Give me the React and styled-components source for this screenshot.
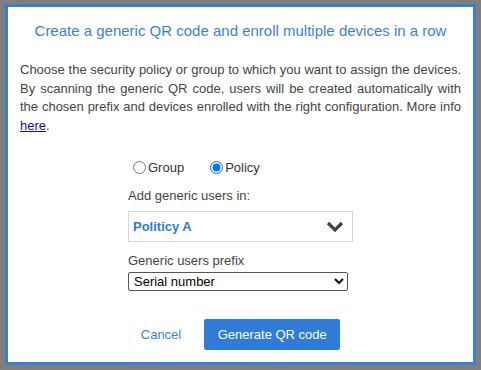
import React, { useState } from "react";
import styled, { createGlobalStyle } from "styled-components";

const GlobalStyle = createGlobalStyle`
  html, body {
    margin: 0;
    padding: 0;
    background: #7f7f7f;
    font-family: "Liberation Sans", Arial, sans-serif;
  }
`;

const Backdrop = styled.div`
  width: 481px;
  height: 370px;
  background: #7f7f7f;
  padding: 4px 5px 0 5px;
  box-sizing: border-box;
  overflow: hidden;
`;

const Modal = styled.div`
  width: 471px;
  height: 361px;
  box-sizing: border-box;
  border: 3px solid #3a80cc;
  background: #fff;
  display: flex;
  flex-direction: column;
  padding: 15px 12px 0 12px;
`;

const Title = styled.h2`
  margin: 0;
  font-size: 15px;
  font-weight: normal;
  line-height: 18px;
  color: #3d7fd6;
  text-align: center;
`;

const Intro = styled.p`
  margin: 21px 0 0 0;
  font-size: 13px;
  line-height: 18.6px;
  color: #444;
  text-align: justify;
`;

const Link = styled.a`
  color: #1a0dab;
  text-decoration: underline;
`;

const Form = styled.div`
  width: 225px;
  align-self: center;
  display: flex;
  flex-direction: column;
  margin-top: 22px;
`;

const RadioRow = styled.div`
  display: flex;
  gap: 26px;
  padding-left: 5px;
  height: 20px;
  align-items: center;
`;

const RadioLabel = styled.label`
  display: flex;
  align-items: center;
  font-size: 13px;
  color: #333;
  gap: 2px;

  input {
    margin: 0;
    width: 13px;
    height: 13px;
  }
`;

const FieldLabel = styled.div`
  font-size: 13px;
  color: #444;
  line-height: 16px;
  margin-top: ${(p) => p.$top}px;
`;

const DropBox = styled.div`
  margin-top: 7px;
  height: 31px;
  box-sizing: border-box;
  border: 1px solid #d6d6d6;
  display: flex;
  align-items: center;
  justify-content: space-between;
  padding: 0 8px 0 4px;
  font-size: 13px;
  font-weight: bold;
  color: #2f7bd6;
`;

const NativeSelect = styled.select`
  margin-top: 3px;
  width: 220px;
  height: 19px;
  font-size: 13px;
  font-family: "Liberation Sans", Arial, sans-serif;
  color: #000;
  padding: 0 0 0 1px;
  border: 1px solid #555;
  border-radius: 2px;
  background: #fff;
`;

const Actions = styled.div`
  display: flex;
  justify-content: center;
  align-items: center;
  gap: 11px;
  margin-top: 28px;
`;

const TextButton = styled.button`
  background: none;
  border: none;
  font-family: inherit;
  font-size: 13px;
  color: #3d7fd6;
  padding: 0 12px 0 0;
  height: 31px;
  cursor: pointer;
`;

const PrimaryButton = styled.button`
  background: #2f7bd6;
  border: none;
  border-radius: 2px;
  color: #fff;
  font-family: inherit;
  font-size: 13px;
  height: 31px;
  width: 136px;
  cursor: pointer;
`;

function Chevron() {
  return (
    <svg width="18" height="12" viewBox="0 0 18 12">
      <path d="M2 2 L9 9 L16 2" fill="none" stroke="#444" strokeWidth="3.2" />
    </svg>
  );
}

export default function App() {
  const [target, setTarget] = useState("policy");
  return (
    <Backdrop>
      <GlobalStyle />
      <Modal>
        <Title>Create a generic QR code and enroll multiple devices in a row</Title>
        <Intro>
          Choose the security policy or group to which you want to assign the devices.
          By scanning the generic QR code, users will be created automatically with
          the chosen prefix and devices enrolled with the right configuration. More info{" "}
          <Link href="#">here</Link>.
        </Intro>
        <Form>
          <RadioRow>
            <RadioLabel>
              <input type="radio" name="target" checked={target === "group"} onChange={() => setTarget("group")} />
              Group
            </RadioLabel>
            <RadioLabel>
              <input type="radio" name="target" checked={target === "policy"} onChange={() => setTarget("policy")} />
              Policy
            </RadioLabel>
          </RadioRow>
          <FieldLabel $top={11}>Add generic users in:</FieldLabel>
          <DropBox>
            <span>Politicy A</span>
            <Chevron />
          </DropBox>
          <FieldLabel $top={11}>Generic users prefix</FieldLabel>
          <NativeSelect defaultValue="serial">
            <option value="serial">Serial number</option>
            <option value="imei">IMEI</option>
          </NativeSelect>
        </Form>
        <Actions>
          <TextButton>Cancel</TextButton>
          <PrimaryButton>Generate QR code</PrimaryButton>
        </Actions>
      </Modal>
    </Backdrop>
  );
}
